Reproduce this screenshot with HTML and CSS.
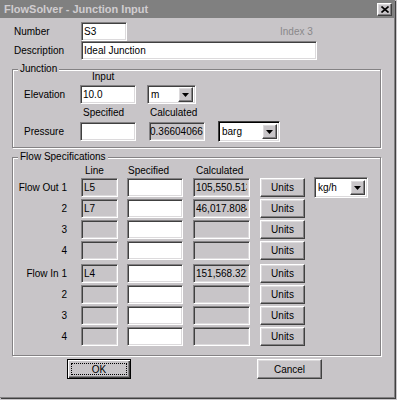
FILE: index.html
```html
<!DOCTYPE html>
<html lang="en">
<head>
    <meta charset="UTF-8" />
    <title>FlowSolver - Junction Input</title>
    <link rel="stylesheet" href="styles.css">
</head>
<body>
    <div class="window">
        <div class="titlebar">
            <span class="title">FlowSolver - Junction Input</span>
            <span class="close raised">
                <svg width="8" height="7" viewBox="0 0 8 7"><path d="M0.5 0.5 L7.5 6.5 M7.5 0.5 L0.5 6.5" stroke="#000" stroke-width="1.6" fill="none"/></svg>
            </span>
        </div>

        <div class="content">
            <div class="field-row">
                <span class="lbl">Number</span>
                <input class="sunken number" value="S3">
                <span class="index">Index 3</span>
            </div>
            <div class="field-row">
                <span class="lbl">Description</span>
                <input class="sunken description" value="Ideal Junction">
            </div>

            <!-- Junction -->
            <div class="group junction">
                <span class="legend">Junction</span>
                <div class="jgrid">
                    <span></span>
                    <span class="head head-input">Input</span>
                    <span></span>
                    <span></span>

                    <span class="jlbl">Elevation</span>
                    <input class="sunken jfield" value="10.0">
                    <div class="combo sunken combo-m">
                        <span class="combo-text">m</span>
                        <span class="arrow raised"><svg width="7" height="4" viewBox="0 0 7 4"><path d="M0 0 H7 L3.5 4 Z" fill="#000"/></svg></span>
                    </div>
                    <span></span>

                    <span></span>
                    <span class="head head-spec">Specified</span>
                    <span class="head head-calc">Calculated</span>
                    <span></span>

                    <span class="jlbl">Pressure</span>
                    <input class="sunken jfield" value="">
                    <input class="sunken readonly jcalc" value="0.36604066" readonly>
                    <div class="combo sunken combo-barg">
                        <span class="combo-text">barg</span>
                        <span class="arrow raised"><svg width="7" height="4" viewBox="0 0 7 4"><path d="M0 0 H7 L3.5 4 Z" fill="#000"/></svg></span>
                    </div>
                </div>
            </div>

            <!-- Flow Specifications -->
            <div class="group flows">
                <span class="legend">Flow Specifications</span>
                <div class="fgrid">
                    <span class="rl"></span>
                    <span class="head head-line">Line</span>
                    <span class="head head-fspec">Specified</span>
                    <span class="head head-fcalc">Calculated</span>

                    <span class="rl">Flow Out 1</span>
                    <input class="sunken readonly line" value="L5" readonly>
                    <input class="sunken spec" value="">
                    <input class="sunken readonly calc" value="105,550.5131" readonly>
                    <button class="raised units">Units</button>
                    <div class="combo sunken combo-kg">
                        <span class="combo-text">kg/h</span>
                        <span class="arrow raised"><svg width="7" height="4" viewBox="0 0 7 4"><path d="M0 0 H7 L3.5 4 Z" fill="#000"/></svg></span>
                    </div>

                    <span class="rl">2</span>
                    <input class="sunken readonly line" value="L7" readonly>
                    <input class="sunken spec" value="">
                    <input class="sunken readonly calc" value="46,017.8084" readonly>
                    <button class="raised units">Units</button>

                    <span class="rl">3</span>
                    <input class="sunken readonly line" value="" readonly>
                    <input class="sunken spec" value="">
                    <input class="sunken readonly calc" value="" readonly>
                    <button class="raised units">Units</button>

                    <span class="rl">4</span>
                    <input class="sunken readonly line" value="" readonly>
                    <input class="sunken spec" value="">
                    <input class="sunken readonly calc" value="" readonly>
                    <button class="raised units">Units</button>

                    <div class="spacer"></div>

                    <span class="rl">Flow In 1</span>
                    <input class="sunken readonly line" value="L4" readonly>
                    <input class="sunken spec" value="">
                    <input class="sunken readonly calc" value="151,568.3215" readonly>
                    <button class="raised units">Units</button>

                    <span class="rl">2</span>
                    <input class="sunken readonly line" value="" readonly>
                    <input class="sunken spec" value="">
                    <input class="sunken readonly calc" value="" readonly>
                    <button class="raised units">Units</button>

                    <span class="rl">3</span>
                    <input class="sunken readonly line" value="" readonly>
                    <input class="sunken spec" value="">
                    <input class="sunken readonly calc" value="" readonly>
                    <button class="raised units">Units</button>

                    <span class="rl">4</span>
                    <input class="sunken readonly line" value="" readonly>
                    <input class="sunken spec" value="">
                    <input class="sunken readonly calc" value="" readonly>
                    <button class="raised units">Units</button>
                </div>
            </div>

            <div class="buttons">
                <button class="raised default ok"><span class="focus">OK</span></button>
                <button class="raised cancel">Cancel</button>
            </div>
        </div>
    </div>
</body>
</html>
```

FILE: styles.css
```css
* {
    margin: 0;
    padding: 0;
    box-sizing: border-box;
}

body {
    font-family: 'Liberation Sans', Arial, sans-serif;
    font-size: 10px;
    color: #000;
    background: #c8c5c8;
    width: 397px;
    height: 400px;
    overflow: hidden;
}

.window {
    width: 395px;
    height: 398px;
    background: #c8c5c8;
    border-right: 1px solid #848284;
    border-bottom: 1px solid #848284;
    box-shadow: 1px 1px 0 #404040;
}

/* Bevels */
.sunken {
    border: 1px solid;
    border-color: #848284 #fff #fff #848284;
    box-shadow: inset 1px 1px #404040, inset -1px -1px #dcdadc;
    background: #fff;
}

.sunken.readonly {
    background: #c8c5c8;
}

.raised {
    border: 1px solid;
    border-color: #fff #404040 #404040 #fff;
    box-shadow: inset -1px -1px #848284, inset 1px 1px #dcdadc;
    background: #c8c5c8;
}

input {
    font-family: inherit;
    font-size: 10px;
    color: #000;
    height: 19px;
    padding: 0 2px;
    outline: none;
}

button {
    font-family: inherit;
    font-size: 10px;
    color: #000;
}

/* Title bar */
.titlebar {
    height: 18px;
    background: #808080;
    display: flex;
    align-items: center;
    padding: 0 2px 0 4px;
}

.title {
    font-size: 11px;
    font-weight: bold;
    color: #d0cdd0;
    flex: 1;
}

.close {
    width: 15px;
    height: 13px;
    display: flex;
    align-items: center;
    justify-content: center;
}

/* Content */
.content {
    padding: 4px 12px 0;
}

.field-row {
    display: flex;
    align-items: center;
    height: 19px;
    padding-left: 2px;
}

.lbl {
    width: 67px;
}

.number {
    width: 46px;
}

.description {
    width: 236px;
}

.index {
    margin-left: 153px;
    color: #8a888a;
}

/* Group boxes */
.group {
    width: 369px;
    border: 1px solid #848284;
    box-shadow: inset 1px 1px #fff, 1px 1px 0 #fff;
    margin-top: 9px;
}

.legend {
    display: block;
    width: fit-content;
    background: #c8c5c8;
    padding: 0 2px;
    line-height: 12px;
    margin: -7px 0 0 5px;
}

.junction {
    padding-bottom: 6px;
}

.junction .legend {
    margin-bottom: -4px;
}

.jgrid {
    display: grid;
    grid-template-columns: 67px 67px 71px 62px;
    grid-template-rows: 12px 19px 14px 19px;
    row-gap: 2px;
    align-items: center;
}

.head {
    line-height: 12px;
}

.jlbl {
    padding-left: 11px;
}

.jfield {
    width: 56px;
}

.jcalc {
    width: 56px;
    margin-left: 2px;
    padding: 0;
}

.head-input { margin-left: 12px; }
.head-spec { margin-left: 3px; }
.head-calc { margin-left: 3px; }

/* Combo boxes */
.combo {
    display: flex;
    align-items: center;
    height: 19px;
    padding: 2px;
}

.combo-text {
    flex: 1;
    padding-left: 1px;
}

.arrow {
    width: 15px;
    height: 15px;
    display: flex;
    align-items: center;
    justify-content: center;
}

.combo-m {
    width: 49px;
}

.combo-barg {
    width: 62px;
    height: 21px;
    align-self: end;
    margin-bottom: -1px;
    border-color: #404040 #fff #fff #404040;
    box-shadow: inset 1px 1px #000, inset -1px -1px #dcdadc;
}

.combo-barg .arrow {
    height: 15px;
}

.combo-kg {
    width: 54px;
    height: 21px;
}

/* Flow grid */
.flows {
    padding-bottom: 8px;
}

.flows .legend {
    margin-bottom: 1px;
}

.fgrid {
    display: grid;
    grid-template-columns: 68px 46px 66px 67px 54px 54px;
    grid-template-rows: 13px repeat(4, 21px) 2px repeat(4, 21px);
    align-items: center;
}

.rl {
    grid-column: 1;
    text-align: right;
    padding-right: 14px;
}

.spacer {
    grid-column: 1 / -1;
    height: 2px;
}

.head-line { margin-left: 4px; }
.head-fspec { margin-left: 1px; }
.head-fcalc { margin-left: 3px; }

.line {
    width: 37px;
}

.spec {
    width: 56px;
}

.calc {
    width: 57px;
}

.units {
    width: 45px;
    height: 19px;
}

/* Bottom buttons */
.buttons {
    display: flex;
    margin-top: 3px;
}

.ok,
.cancel {
    height: 20px;
}

.ok {
    width: 64px;
    margin-left: 55px;
    padding: 3px;
    border: 1px solid #000;
    box-shadow: inset 1px 1px #fff, inset -1px -1px #404040, inset -2px -2px #848284;
}

.focus {
    display: flex;
    align-items: center;
    justify-content: center;
    height: 100%;
    border: 1px dotted #000;
}

.cancel {
    width: 65px;
    margin-left: 126px;
}
```
